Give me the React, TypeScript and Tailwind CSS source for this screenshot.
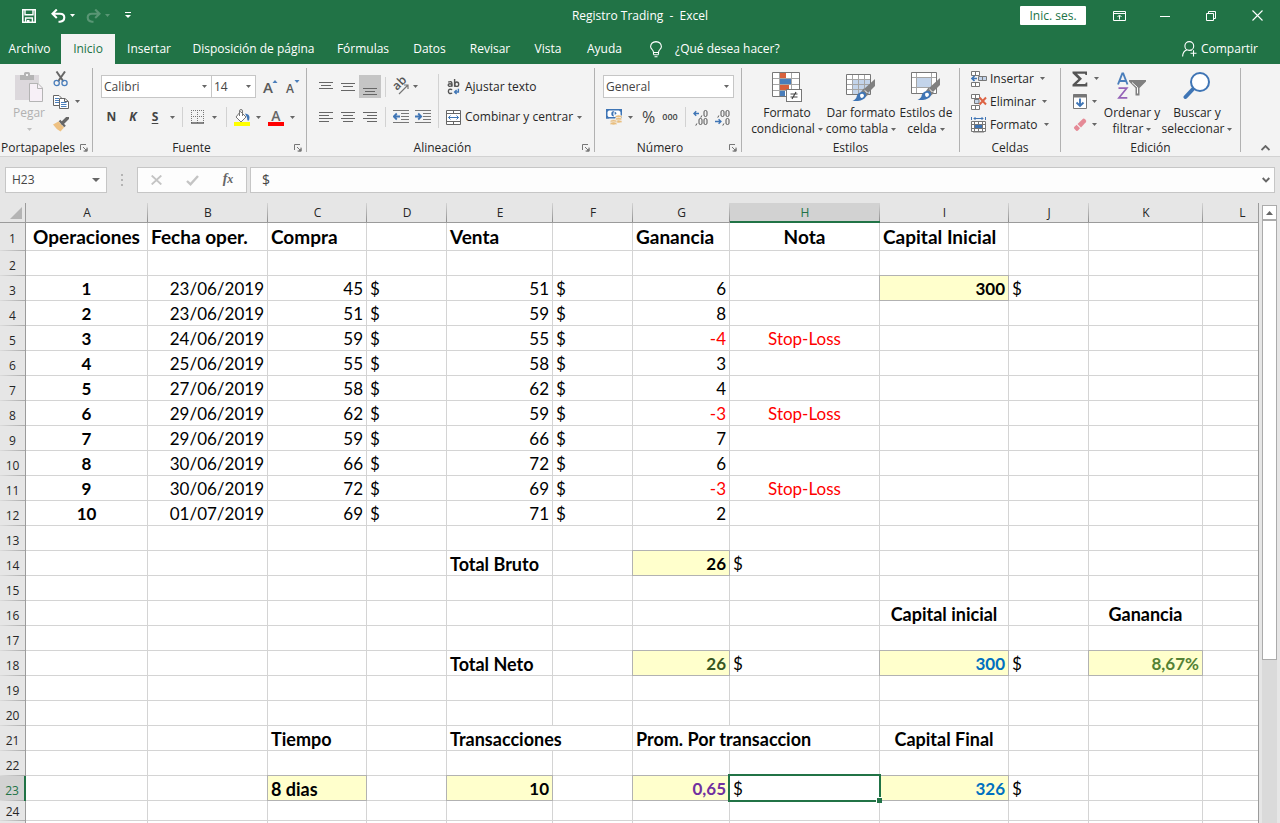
import type { ReactNode } from "react";

/* ---------- small shared pieces ---------- */

function Caret({ className = "" }: { className?: string }) {
  return (
    <svg className={`shrink-0 ${className}`} width="5" height="3" viewBox="0 0 5 3" aria-hidden="true">
      <path d="M0 0H5L2.5 3Z" fill="currentColor" />
    </svg>
  );
}

function CaretButton({ label, className = "w-4" }: { label: string; className?: string }) {
  return (
    <button type="button" aria-label={label} className={`flex h-full items-center justify-center text-[#666] ${className}`}>
      <Caret />
    </button>
  );
}

function IconButton({ label, className = "", children }: { label: string; className?: string; children: ReactNode }) {
  return (
    <button type="button" aria-label={label} className={`flex shrink-0 items-center justify-center ${className}`}>
      {children}
    </button>
  );
}

function Rule({ className = "" }: { className?: string }) {
  return <div className={`h-5 w-px shrink-0 bg-[#d2d2d2] ${className}`} />;
}

function Launcher() {
  return (
    <svg width="8" height="8" viewBox="0 0 8 8" fill="none" stroke="#777" aria-hidden="true">
      <path d="M0.5 6V0.5H6M3 3L6 6M7 3.5V7H3.5" />
      <path d="M7.5 4V7.5H4Z" fill="#777" stroke="none" />
    </svg>
  );
}

function Group({ title, width, launcher = false, children }: { title: string; width: string; launcher?: boolean; children: ReactNode }) {
  return (
    <>
      <section aria-label={title} className={`flex shrink-0 flex-col ${width}`}>
        <div className="flex h-[76px]">{children}</div>
        <div className="flex h-4 items-center">
          <span className="flex-1 text-center whitespace-nowrap">{title}</span>
          {launcher && (
            <IconButton label={`Configuración de ${title}`} className="w-4">
              <Launcher />
            </IconButton>
          )}
        </div>
      </section>
      <div className="my-1 w-px shrink-0 bg-[#b1b1b1]" />
    </>
  );
}

function BigButton({ icon, line1, line2, width, disabled = false }: { icon: ReactNode; line1: string; line2?: string; width: string; disabled?: boolean }) {
  return (
    <button type="button" className={`flex shrink-0 flex-col items-center pt-2 leading-4 whitespace-nowrap ${width} ${disabled ? "text-[#b1b1b1]" : ""}`}>
      <span className="mb-[3px] flex h-[30px] items-start">{icon}</span>
      <span>{line1}</span>
      <span className="flex h-4 items-center gap-[3px]">
        {line2}
        <Caret className={disabled ? "text-[#c0c0c0]" : "text-[#666]"} />
      </span>
    </button>
  );
}

/* ---------- icons ---------- */

const PasteIcon = () => (
  <svg width="28" height="30" viewBox="0 0 28 30">
    <path d="M0 3H24V28H0Z" fill="#dcd8dc" />
    <path d="M5 3H9V1.5Q9 0 10.5 0H13.5Q15 0 15 1.5V3H19V8H5Z" fill="#b4b4b4" />
    <rect x="11" y="2" width="2" height="2" fill="#f3f3f3" />
    <path d="M14.5 11.5H23L27.5 16V29.5H14.5Z" fill="#f7f0f7" stroke="#b4b4b4" />
    <path d="M22.5 11.5V16.5H27.5" fill="none" stroke="#b4b4b4" />
  </svg>
);

const CutIcon = () => (
  <svg width="16" height="16" viewBox="0 0 16 16" fill="none">
    <path d="M3.5 0.5L10.5 10.5M12 0.5L5 10.5" stroke="#666" strokeWidth="2" />
    <circle cx="3.7" cy="12" r="2.6" stroke="#4a7ebb" strokeWidth="1.3" />
    <circle cx="11.5" cy="12" r="2.6" stroke="#4a7ebb" strokeWidth="1.3" />
  </svg>
);

const CopyIcon = () => (
  <svg width="16" height="14" viewBox="0 0 16 14" fill="#fff" stroke="#666">
    <path d="M0.5 0.5H6L8.5 3V10.5H0.5Z" />
    <path d="M2 3.5H6M2 5.5H6M2 7.5H6" stroke="#4a7ebb" />
    <path d="M6.5 3.5H12L15.5 6.5V13.5H6.5Z" />
    <path d="M11.5 3.5V6.5H15" fill="none" />
    <path d="M8 7.5H13.5M8 9.5H13.5M8 11.5H13.5" stroke="#4a7ebb" />
  </svg>
);

const BrushIcon = () => (
  <svg width="16" height="15" viewBox="0 0 16 15">
    <path d="M0 7.5L5.5 4.5L11 10.5L7.5 14.5Q3 12 0 7.5Z" fill="#eec182" />
    <path d="M6.5 3.5L12 9.5" stroke="#666" strokeWidth="2.2" />
    <path d="M9.5 6L14.5 1" stroke="#666" strokeWidth="3.4" strokeLinecap="round" />
  </svg>
);

function FontSizeIcon({ up }: { up: boolean }) {
  return (
    <svg className="overflow-visible" width="15" height="16" viewBox="0 0 15 16" fontWeight="600" aria-hidden="true">
      <text x={up ? 0 : 1} y="14" fontSize={up ? 15 : 12} fill="#5a5a5a">A</text>
      <path d={up ? "M9.5 4H14.5L12 1Z" : "M9.5 1H14.5L12 4Z"} fill="#4a7ebb" />
    </svg>
  );
}

const BordersIcon = () => (
  <svg width="14" height="14" viewBox="0 0 14 14" fill="none" stroke="#777">
    <path d="M0 0.5H13M0 6.5H13M0.5 0V13M6.5 0V13M12.5 0V13" strokeDasharray="1 1" />
    <path d="M0 13H13" stroke="#555" strokeWidth="1.4" />
  </svg>
);

const FillIcon = () => (
  <svg width="16" height="17" viewBox="0 0 16 17">
    <path d="M6.5 2.5L12 8L7 13L2 8Z" fill="#fff" stroke="#777" />
    <path d="M5.5 7V2Q5.5 0.5 7 0.5T8.5 2V7" fill="none" stroke="#777" />
    <path d="M11 4.5Q15.5 5 15.5 8.5Q15.5 11 14 12Q13 10.5 13 8.5Z" fill="#3f75b5" />
    <rect y="13" width="16" height="4" fill="#ff0" />
  </svg>
);

const FontColorIcon = () => (
  <svg className="overflow-visible" width="16" height="17" viewBox="0 0 16 17">
    <text x="8" y="12" textAnchor="middle" fontSize="14" fontWeight="600" fill="#666">A</text>
    <rect y="13" width="16" height="4" fill="#f00" />
  </svg>
);

function LinesIcon({ d }: { d: string }) {
  return (
    <svg width="14" height="16" viewBox="0 0 14 16" fill="none" stroke="#666" aria-hidden="true">
      <path d={d} />
    </svg>
  );
}

const OrientationIcon = () => (
  <svg className="overflow-visible" width="16" height="16" viewBox="0 0 16 16">
    <text x="4" y="12" fontSize="12" fontWeight="600" fill="#555" transform="rotate(-45 4 12)">ab</text>
    <path d="M6 15L14.5 6.5M11 6H15V10" fill="none" stroke="#777" strokeWidth="1.2" />
  </svg>
);

function IndentIcon({ right }: { right: boolean }) {
  return (
    <svg width="16" height="14" viewBox="0 0 16 14" fill="none" stroke="#777" aria-hidden="true">
      <path d="M0 0.5H16M8 3.5H16M8 6.5H16M8 9.5H16M0 12.5H16" />
      <path d={right ? "M0 6.5H6M3.2 3.5L6.2 6.5L3.2 9.5" : "M1 6.5H7M3.8 3.5L0.8 6.5L3.8 9.5"} stroke="#3f75b5" strokeWidth="1.8" />
    </svg>
  );
}

const WrapIcon = () => (
  <svg width="14" height="16" viewBox="0 0 14 16" fill="none" stroke="#555" strokeWidth="1.4">
    <path d="M1.2 3.2Q4.9 1.6 4.9 4.6V7.8" />
    <ellipse cx="3" cy="6.1" rx="1.8" ry="1.3" />
    <path d="M7.6 0V7.8" />
    <ellipse cx="9.7" cy="5.2" rx="2" ry="2.2" />
    <path d="M5.2 10.7Q1.4 9.4 1.4 12.4Q1.5 15.3 5.2 14.2" />
    <path d="M11.4 9.8V13H8M9.6 11L7.6 13L9.6 15" stroke="#3f75b5" />
  </svg>
);

const MergeIcon = () => (
  <svg width="15" height="15" viewBox="0 0 15 15" fill="#fff" stroke="#666">
    <path d="M0.5 0.5H14.5V14.5H0.5ZM0.5 3.5H14.5M0.5 11.5H14.5M7.5 0.5V3.5M7.5 11.5V14.5" />
    <path d="M2.5 7.5H12.5M4.5 5.5L2.5 7.5L4.5 9.5M10.5 5.5L12.5 7.5L10.5 9.5" fill="none" stroke="#3f75b5" />
  </svg>
);

const CurrencyIcon = () => (
  <svg width="16" height="16" viewBox="0 0 16 16">
    <rect x="0.75" y="0.75" width="14.5" height="8" fill="#fff" stroke="#3f75b5" strokeWidth="1.5" />
    <path d="M0 0H3Q2.8 2.8 0 3ZM16 0H13Q13 2.8 16 3ZM0 9.5H3Q2.8 6.8 0 6.5Z" fill="#3f75b5" />
    <path d="M8 2A2.7 2.7 0 0 0 8 7.4Q6.6 4.8 8 2ZM8.5 2.4Q10.6 3.2 10.6 4.6L8.8 6Z" fill="#3f75b5" />
    <g fill="#e9be7e" stroke="#f3f3f3" strokeWidth="0.7">
      <ellipse cx="12.6" cy="7.5" rx="3.4" ry="1.6" />
      <ellipse cx="12.6" cy="10" rx="3.4" ry="1.6" />
      <ellipse cx="12.6" cy="12.5" rx="3.4" ry="1.6" />
      <ellipse cx="7.5" cy="12.2" rx="3.4" ry="1.6" />
      <ellipse cx="7.5" cy="14.4" rx="3.4" ry="1.6" />
    </g>
  </svg>
);

function Ring({ x, y }: { x: number; y: number }) {
  return <rect x={x} y={y} width="3" height="6" rx="1.4" />;
}

function DecimalsIcon({ more }: { more: boolean }) {
  return (
    <svg width="16" height="17" viewBox="0 0 16 17" fill="none" stroke="#555" aria-hidden="true">
      {more ? (
        <>
          <Ring x={11} y={1.5} />
          <Ring x={6} y={9.5} />
          <Ring x={11} y={9.5} />
          <path d="M8.8 6.5L7.8 8.6M3.8 14.5L2.8 16.6" />
          <path d="M0.8 4.5H6M3.2 2.3L0.9 4.5L3.2 6.7" stroke="#3f75b5" strokeWidth="1.4" />
        </>
      ) : (
        <>
          <Ring x={6} y={1.5} />
          <Ring x={11} y={1.5} />
          <Ring x={11} y={9.5} />
          <path d="M3.8 6.5L2.8 8.6M8.8 14.5L7.8 16.6" />
          <path d="M0 12.5H6M3.6 10.3L5.9 12.5L3.6 14.7" stroke="#3f75b5" strokeWidth="1.4" />
        </>
      )}
    </svg>
  );
}

const ConditionalIcon = () => (
  <svg width="30" height="30" viewBox="0 0 30 30">
    <path d="M0.5 0.5H27.5V24.5H0.5Z" fill="#fff" />
    <path d="M8 1H14V6H8Z" fill="#d8603c" />
    <path d="M8 7H19V12H8Z" fill="#4a7ebb" />
    <path d="M8 13H17V18H8Z" fill="#d8603c" />
    <path d="M8 19H13V24H8Z" fill="#4a7ebb" />
    <path d="M0.5 6.5H27.5M0.5 12.5H27.5M0.5 18.5H14M7.5 0.5V24.5M19.5 0.5V18" stroke="#a5a5a5" fill="none" />
    <path d="M0.5 0.5H27.5V24.5H0.5Z" fill="none" stroke="#777" />
    <rect x="14.5" y="17.5" width="15" height="12" fill="#fff" stroke="#777" />
    <path d="M18.5 22H25.5M18.5 25H25.5M24 20L20 27" stroke="#444" strokeWidth="1.2" />
  </svg>
);

const StyleBrush = () => (
  <>
    <path d="M29 7V14L22 21L18 17Z" fill="#808080" />
    <path d="M17.5 16.5L23 22L19.5 25L15 20Z" fill="#808080" />
    <path d="M18.8 18.4L21.4 21" stroke="#f3f3f3" strokeWidth="1" />
    <path d="M14 20.5Q17.5 18.5 19.6 21.2Q21 24 18.5 26.5Q15 29.5 6.5 29Q10.5 27 10.8 24Q11.2 21.6 14 20.5Z" fill="#3f75b5" />
    <path d="M14.3 22.2Q17 21 18 23.2Q18 25.5 16 26Q13.4 25.5 14.3 22.2Z" fill="#fff" />
  </>
);

const TableStyleIcon = () => (
  <svg width="30" height="30" viewBox="0 0 30 30">
    <path d="M0.5 2.5H24.5V22.5H0.5Z" fill="#fff" />
    <path d="M7 8H24V22H7Z" fill="#c3d4ea" />
    <path d="M0.5 7.5H24.5M0.5 12.5H24.5M0.5 17.5H24.5M6.5 2.5V22.5M12.5 2.5V22.5M18.5 2.5V22.5" stroke="#a5a5a5" />
    <path d="M0.5 2.5H24.5V22.5H0.5Z" fill="none" stroke="#777" />
    <StyleBrush />
  </svg>
);

const CellStyleIcon = () => (
  <svg width="30" height="30" viewBox="0 0 30 30">
    <path d="M0.5 0.5H25.5V21.5H0.5Z" fill="#fff" />
    <path d="M6 6H20V15H6Z" fill="#c3d4ea" />
    <path d="M0.5 5.5H25.5M0.5 15.5H25.5M5.5 0.5V21.5M20.5 0.5V21.5" stroke="#a5a5a5" />
    <path d="M0.5 0.5H25.5V21.5H0.5Z" fill="none" stroke="#777" />
    <g transform="translate(0 -1)">
      <StyleBrush />
    </g>
  </svg>
);

const InsertCellsIcon = () => (
  <svg width="16" height="16" viewBox="0 0 16 16" fill="#fff" stroke="#777">
    <path d="M0.5 0.5H8.5V4.5H0.5ZM4.5 0.5V4.5M0.5 11.5H8.5V15.5H0.5ZM4.5 11.5V15.5" />
    <path d="M7.5 5.5H15.5V9.5H7.5ZM11.5 5.5V9.5" fill="#c3d4ea" />
    <path d="M1 7.5H6M3.5 5L1 7.5L3.5 10" fill="none" stroke="#3f75b5" strokeWidth="1.7" />
  </svg>
);

const DeleteCellsIcon = () => (
  <svg width="16" height="16" viewBox="0 0 16 16" fill="#fff" stroke="#777">
    <path d="M0.5 0.5H8.5V4.5H0.5ZM4.5 0.5V4.5M0.5 11.5H8.5V15.5H0.5ZM4.5 11.5V15.5" />
    <path d="M3.5 5.5H8V9.5H3.5Z" fill="#c3d4ea" />
    <path d="M8.5 3.5L15 10.5M15 3.5L8.5 10.5" stroke="#dd6344" strokeWidth="2" />
  </svg>
);

const FormatCellsIcon = () => (
  <svg width="15" height="16" viewBox="0 0 15 16" fill="#fff" stroke="#777">
    <path d="M0.5 4.5H14.5V14.5H0.5ZM0.5 7.5H14.5M0.5 11.5H14.5M3.5 4.5V14.5M11.5 4.5V14.5M7.5 4.5V14.5" />
    <path d="M4 8H11V11H4Z" fill="#3f75b5" stroke="none" />
    <path d="M0.5 0V3M14.5 0V3M3 1.5H12M4.5 0L3 1.5L4.5 3M10.5 0L12 1.5L10.5 3" fill="none" stroke="#3f75b5" />
    <path d="M2 15.5H13" stroke="#b8b8b8" />
  </svg>
);

const SumIcon = () => (
  <svg width="16" height="16" viewBox="0 0 16 16">
    <path d="M0.5 0.5H15V4H13.5L13 2.8H5L10 7.8L4.6 13H13.2L14 11.5H15.3V15.5H0.5V13.6L6.4 8L0.5 2.2Z" fill="#555" />
  </svg>
);

const FillDownIcon = () => (
  <svg width="14" height="15" viewBox="0 0 14 15" fill="#fff" stroke="#777">
    <path d="M0.5 0.5H13.5V14.5H0.5Z" />
    <path d="M0.5 1H13.5V3H0.5Z" fill="#777" />
    <path d="M7 4.5V12M3.5 8.5L7 12L10.5 8.5" fill="none" stroke="#3f75b5" strokeWidth="1.9" />
  </svg>
);

const EraserIcon = () => (
  <svg width="14" height="14" viewBox="0 0 14 14">
    <path d="M4.5 6L10 0.8Q11 0.2 12 1.3L13 2.6Q13.5 3.5 12.8 4.3L8 9.5Z" fill="#e58a96" />
    <path d="M3.6 6.8L7 10.3L5 12.6Q4 13.4 3 12.4L1.3 10.7Q0.4 9.7 1.4 8.8Z" fill="#e58a96" />
  </svg>
);

const SortIcon = () => (
  <svg width="30" height="28" viewBox="0 0 30 28" fill="none">
    <path d="M1 12.5L5.3 1.5H6.2L10.5 12.5M2.7 9H8.8" stroke="#4a7ebb" strokeWidth="1.9" />
    <path d="M1.5 16.2H9.7L2 25.8H10.3" stroke="#9563b8" strokeWidth="1.8" />
    <path d="M12 8H29V9.5L22.5 16V23.5H18.5V16L12 9.5Z" fill="#808080" />
    <path d="M15 10.5L20.5 15.5V21.5" stroke="#fff" />
  </svg>
);

const SearchIcon = () => (
  <svg width="28" height="28" viewBox="0 0 28 28" fill="none">
    <path d="M10 17L2.5 25" stroke="#3f75b5" strokeWidth="4" strokeLinecap="round" />
    <circle cx="17" cy="10" r="9" fill="#fff" stroke="#3f75b5" strokeWidth="2" />
  </svg>
);

const SaveIcon = () => (
  <svg width="14" height="14" viewBox="0 0 14 14" fill="none" stroke="#fff" strokeWidth="1.6">
    <path d="M0.8 0.8H13.2V13.2H0.8Z" />
    <path d="M3 1V5.7H11V1M3.6 13V9H10.4V13" strokeWidth="1.4" />
    <path d="M5 11H7.5V13.5H5Z" fill="#fff" stroke="none" />
  </svg>
);

const UndoIcon = ({ flip = false }: { flip?: boolean }) => (
  <svg width="15" height="14" viewBox="0 0 15 14" fill="none" stroke="#fff" strokeWidth="2.1" className={flip ? "-scale-x-100" : ""}>
    <path d="M5.8 0.5L1.5 4.7L5.8 8.9M1.8 4.7H9Q13.3 4.8 13.3 8.5Q13.2 12.3 9 12.7H7.5" />
  </svg>
);

/* ---------- title bar and tabs ---------- */

function TitleBar() {
  return (
    <header className="grid h-[31px] grid-cols-[1fr_auto_1fr] items-center text-white">
      <div className="flex h-full items-center pl-[22px]">
        <IconButton label="Guardar"><SaveIcon /></IconButton>
        <IconButton label="Deshacer" className="ml-[15px]"><UndoIcon /></IconButton>
        <IconButton label="Más acciones de deshacer" className="w-3"><Caret /></IconButton>
        <div className="flex items-center opacity-25">
          <IconButton label="Rehacer" className="ml-2"><UndoIcon flip /></IconButton>
          <IconButton label="Más acciones de rehacer" className="w-3"><Caret /></IconButton>
        </div>
        <IconButton label="Personalizar barra de acceso rápido" className="ml-3">
          <svg width="6" height="7" viewBox="0 0 6 7"><path d="M0 0.5H6" stroke="#fff" /><path d="M0 3H6L3 6Z" fill="#fff" /></svg>
        </IconButton>
      </div>
      <h1 className="whitespace-pre">{"Registro Trading  -  Excel"}</h1>
      <div className="flex h-full items-center justify-end">
        <button type="button" className="mr-[10px] h-[19px] w-[66px] rounded-[1px] bg-white leading-[19px] text-[#217346]">Inic. ses.</button>
        <IconButton label="Opciones de presentación de la cinta" className="w-[46px]">
          <svg width="13" height="10" viewBox="0 0 13 10" fill="none" stroke="#fff"><path d="M0.5 0.5H12.5V9.5H0.5ZM0.5 2.5H12.5M6.5 8.5V4.5M4.5 6L6.5 4L8.5 6" /></svg>
        </IconButton>
        <IconButton label="Minimizar" className="w-[46px]">
          <svg width="10" height="10" viewBox="0 0 10 10" stroke="#fff"><path d="M0 5.5H10" /></svg>
        </IconButton>
        <IconButton label="Restaurar" className="w-[46px]">
          <svg width="10" height="10" viewBox="0 0 10 10" fill="none" stroke="#fff"><path d="M0.5 2.5H7.5V9.5H0.5ZM2.5 2.5V0.5H9.5V7.5H7.5" /></svg>
        </IconButton>
        <IconButton label="Cerrar" className="w-[46px]">
          <svg width="11" height="11" viewBox="0 0 11 11" stroke="#fff" strokeWidth="1.1"><path d="M0.5 0.5L10.5 10.5M10.5 0.5L0.5 10.5" /></svg>
        </IconButton>
      </div>
    </header>
  );
}

const tabs = [
  { name: "Archivo", width: "w-[59px] mr-0.5" },
  { name: "Inicio", width: "w-[54px]", active: true },
  { name: "Insertar", width: "w-[68px]" },
  { name: "Disposición de página", width: "w-[141px]" },
  { name: "Fórmulas", width: "w-[78px]" },
  { name: "Datos", width: "w-[55px]" },
  { name: "Revisar", width: "w-[66px]" },
  { name: "Vista", width: "w-[50px]" },
  { name: "Ayuda", width: "w-[63px]" },
];

function TabBar() {
  return (
    <nav aria-label="Cinta de opciones" className="flex h-[33px] items-end text-white">
      {tabs.map((t) => (
        <button key={t.name} type="button" className={`h-[30px] shrink-0 whitespace-nowrap ${t.width} ${t.active ? "bg-[#f3f3f3] text-[#217346]" : ""}`}>
          {t.name}
        </button>
      ))}
      <button type="button" className="ml-[14px] flex h-[30px] items-center gap-[13px] whitespace-nowrap">
        <svg width="12" height="17" viewBox="0 0 12 17" fill="none" stroke="#fff" strokeWidth="1.1">
          <path d="M3.5 11.5Q3.5 9.8 2 8.4Q0.6 7 0.6 5.5Q1 0.9 6 0.6Q11 0.9 11.4 5.5Q11.4 7 10 8.4Q8.5 9.8 8.5 11.5ZM3.5 13.7H8.5M4.5 15.8H7.5M3.5 11.5V13.5M8.5 11.5V13.5" />
        </svg>
        ¿Qué desea hacer?
      </button>
      <button type="button" className="mr-[22px] ml-auto flex h-[30px] items-center gap-1 whitespace-nowrap">
        <svg width="15" height="16" viewBox="0 0 15 16" fill="none" stroke="#fff" strokeWidth="1.1">
          <circle cx="7.3" cy="5" r="4.4" />
          <path d="M0.6 15.5Q0.8 10.3 5 8.8M8.5 9.2L9.5 9.8M8.5 12.2H14.5M11.5 9.2V15.5" />
        </svg>
        Compartir
      </button>
    </nav>
  );
}

/* ---------- ribbon ---------- */

function RibbonSelect({ label, value, width }: { label: string; value: string; width: string }) {
  return (
    <label className={`grid h-[23px] shrink-0 items-center border border-[#c6c6c6] bg-white text-[#444] ${width}`}>
      <select aria-label={label} defaultValue={value} className="col-start-1 row-start-1 h-full w-full appearance-none bg-transparent pl-0.5 outline-none">
        <option>{value}</option>
      </select>
      <Caret className="pointer-events-none col-start-1 row-start-1 mr-1 justify-self-end text-[#666]" />
    </label>
  );
}

function CellAction({ icon, label }: { icon: ReactNode; label: string }) {
  return (
    <button type="button" className="flex h-[23px] items-center whitespace-nowrap">
      <span className="mr-[3px] w-4">{icon}</span>
      {label}
      <Caret className="ml-[6px] text-[#666]" />
    </button>
  );
}

function Ribbon() {
  return (
    <div className="flex h-[93px] overflow-hidden border-b border-[#d2d2d2] bg-[#f3f3f3] text-[#262626]">
      <Group title="Portapapeles" width="w-[92px]" launcher>
        <BigButton icon={<PasteIcon />} line1="Pegar" width="ml-3 w-[34px]" disabled />
        <div className="ml-[7px] flex flex-col pt-[3px]">
          <IconButton label="Cortar" className="h-[23px] w-4"><CutIcon /></IconButton>
          <div className="flex h-[23px]">
            <IconButton label="Copiar" className="w-4"><CopyIcon /></IconButton>
            <CaretButton label="Opciones de copiar" />
          </div>
          <IconButton label="Copiar formato" className="h-[23px] w-4"><BrushIcon /></IconButton>
        </div>
      </Group>

      <Group title="Fuente" width="w-[213px]" launcher>
        <div className="flex flex-col gap-2 pt-[11px] pl-2">
          <div className="flex h-[23px] items-center">
            <RibbonSelect label="Fuente" value="Calibri" width="w-[111px]" />
            <RibbonSelect label="Tamaño de fuente" value="14" width="-ml-px w-[45px]" />
            <IconButton label="Aumentar tamaño de fuente" className="ml-[3px] w-[22px]"><FontSizeIcon up /></IconButton>
            <IconButton label="Disminuir tamaño de fuente" className="w-[22px]"><FontSizeIcon up={false} /></IconButton>
          </div>
          <div className="flex h-[22px] items-center text-[#444]">
            <button type="button" className="w-[21px] font-bold">N</button>
            <button type="button" className="w-[22px] font-bold italic">K</button>
            <button type="button" className="w-[22px] font-bold underline underline-offset-2">S</button>
            <CaretButton label="Opciones de subrayado" className="w-3" />
            <Rule className="ml-1" />
            <IconButton label="Bordes" className="ml-[7px] w-4"><BordersIcon /></IconButton>
            <CaretButton label="Opciones de bordes" />
            <Rule className="ml-1" />
            <IconButton label="Color de relleno" className="ml-[7px] w-4"><FillIcon /></IconButton>
            <CaretButton label="Opciones de relleno" />
            <IconButton label="Color de fuente" className="ml-0.5 w-4"><FontColorIcon /></IconButton>
            <CaretButton label="Opciones de color de fuente" />
          </div>
        </div>
      </Group>

      <Group title="Alineación" width="w-[287px]" launcher>
        <div className="flex w-[131px] flex-col gap-2 pt-[11px] pl-2">
          <div className="flex h-[23px] items-center">
            <IconButton label="Alinear en la parte superior" className="h-full w-[22px]"><LinesIcon d="M0 3.5H14M2 6.5H12M0 9.5H14" /></IconButton>
            <IconButton label="Alinear en el medio" className="h-full w-[22px]"><LinesIcon d="M0 4.5H14M2 7.5H12M0 11.5H14" /></IconButton>
            <IconButton label="Alinear en la parte inferior" className="h-full w-[22px] bg-[#c5c5c5]"><LinesIcon d="M0 9.5H14M2 12.5H12M0 15.5H14" /></IconButton>
            <Rule className="ml-1" />
            <IconButton label="Orientación" className="ml-[7px] w-4"><OrientationIcon /></IconButton>
            <CaretButton label="Opciones de orientación" className="w-3" />
          </div>
          <div className="flex h-[22px] items-center">
            <IconButton label="Alinear a la izquierda" className="w-[22px]"><LinesIcon d="M0 3.5H14M0 6.5H10M0 9.5H14M0 12.5H10" /></IconButton>
            <IconButton label="Centrar" className="w-[22px]"><LinesIcon d="M0 3.5H14M2 6.5H12M0 9.5H14M2 12.5H12" /></IconButton>
            <IconButton label="Alinear a la derecha" className="w-[22px]"><LinesIcon d="M0 3.5H14M4 6.5H14M0 9.5H14M4 12.5H14" /></IconButton>
            <Rule className="ml-1" />
            <IconButton label="Disminuir sangría" className="ml-[7px] w-4"><IndentIcon right={false} /></IconButton>
            <IconButton label="Aumentar sangría" className="ml-[6px] w-4"><IndentIcon right /></IconButton>
          </div>
        </div>
        <div className="mt-[10px] h-[54px] w-px bg-[#d2d2d2]" />
        <div className="flex flex-col gap-2 pt-[11px] pl-[7px]">
          <button type="button" className="flex h-[23px] items-center whitespace-nowrap">
            <span className="mr-[3px] flex w-4 justify-center"><WrapIcon /></span>
            Ajustar texto
          </button>
          <button type="button" className="flex h-[22px] items-center whitespace-nowrap">
            <span className="mr-[3px] w-4"><MergeIcon /></span>
            Combinar y centrar
            <Caret className="ml-1 text-[#666]" />
          </button>
        </div>
      </Group>

      <Group title="Número" width="w-[146px]" launcher>
        <div className="flex flex-col gap-2 pt-[11px] pl-2">
          <RibbonSelect label="Formato de número" value="General" width="w-[131px]" />
          <div className="flex h-[22px] items-center text-[#444]">
            <IconButton label="Formato de contabilidad" className="ml-[3px] w-4"><CurrencyIcon /></IconButton>
            <CaretButton label="Opciones de contabilidad" />
            <button type="button" className="w-[21px] text-base">%</button>
            <button type="button" aria-label="Estilo millares" className="w-[22px] text-[9px] font-semibold">000</button>
            <Rule className="ml-1" />
            <IconButton label="Aumentar decimales" className="ml-[7px] w-4"><DecimalsIcon more /></IconButton>
            <IconButton label="Disminuir decimales" className="ml-[6px] w-4"><DecimalsIcon more={false} /></IconButton>
          </div>
        </div>
      </Group>

      <Group title="Estilos" width="w-[217px]">
        <BigButton icon={<ConditionalIcon />} line1="Formato" line2="condicional" width="ml-[7px] w-[76px]" />
        <BigButton icon={<TableStyleIcon />} line1="Dar formato" line2="como tabla" width="w-[72px]" />
        <BigButton icon={<CellStyleIcon />} line1="Estilos de" line2="celda" width="ml-px w-[56px]" />
      </Group>

      <Group title="Celdas" width="w-[100px]">
        <div className="flex flex-col items-start pt-[3px] pl-[11px]">
          <CellAction icon={<InsertCellsIcon />} label="Insertar" />
          <CellAction icon={<DeleteCellsIcon />} label="Eliminar" />
          <CellAction icon={<FormatCellsIcon />} label="Formato" />
        </div>
      </Group>

      <Group title="Edición" width="w-[179px]">
        <div className="flex flex-col pt-[3px] pl-[11px]">
          <div className="flex h-[23px]">
            <IconButton label="Autosuma" className="w-4"><SumIcon /></IconButton>
            <CaretButton label="Opciones de autosuma" />
          </div>
          <div className="flex h-[23px]">
            <IconButton label="Rellenar" className="w-4"><FillDownIcon /></IconButton>
            <CaretButton label="Opciones de rellenar" className="w-3" />
          </div>
          <div className="flex h-[23px]">
            <IconButton label="Borrar" className="w-4"><EraserIcon /></IconButton>
            <CaretButton label="Opciones de borrar" className="w-3" />
          </div>
        </div>
        <BigButton icon={<SortIcon />} line1="Ordenar y" line2="filtrar" width="-ml-0.5 w-[60px]" />
        <BigButton icon={<SearchIcon />} line1="Buscar y" line2="seleccionar" width="w-[70px]" />
      </Group>

      <IconButton label="Contraer la cinta" className="mr-[10px] mb-[5px] ml-auto self-end">
        <svg width="9" height="6" viewBox="0 0 9 6" fill="none" stroke="#666" strokeWidth="1.8"><path d="M0.5 5L4.5 1L8.5 5" /></svg>
      </IconButton>
    </div>
  );
}

/* ---------- formula bar ---------- */

function FormulaBar() {
  return (
    <div className="flex h-[46px] px-[5px] pt-[10px] text-[#444]">
      <div className="flex h-[26px] w-[102px] shrink-0 items-center border border-[#c6c6c6] bg-[#fdfdfd]">
        <input aria-label="Cuadro de nombres" defaultValue="H23" className="w-full min-w-0 bg-transparent pl-[6px] outline-none" />
        <IconButton label="Lista de nombres" className="mr-[6px] text-[#666]">
          <svg width="8" height="4" viewBox="0 0 8 4"><path d="M0 0H8L4 4Z" fill="currentColor" /></svg>
        </IconButton>
      </div>
      <div className="flex h-[26px] w-[30px] shrink-0 items-center justify-center">
        <svg width="2" height="12" viewBox="0 0 2 12" fill="#b4b4b4"><path d="M0 0H2V2H0ZM0 5H2V7H0ZM0 10H2V12H0Z" /></svg>
      </div>
      <div className="flex h-[26px] w-[110px] shrink-0 border border-[#c6c6c6] bg-[#fdfdfd]">
        <IconButton label="Cancelar" className="w-9">
          <svg width="11" height="10" viewBox="0 0 11 10" stroke="#c4c4c4" strokeWidth="1.8"><path d="M0.7 0.5L10.3 9.5M10.3 0.5L0.7 9.5" /></svg>
        </IconButton>
        <IconButton label="Introducir" className="w-9">
          <svg width="13" height="11" viewBox="0 0 13 11" fill="none" stroke="#c4c4c4" strokeWidth="2.4"><path d="M1 6L4.5 9.3L12 1" /></svg>
        </IconButton>
        <button type="button" aria-label="Insertar función" className="flex-1 pb-0.5 font-['Liberation_Serif',serif] text-sm font-bold text-[#666] italic">
          f<span className="text-xs">x</span>
        </button>
      </div>
      <div className="ml-[3px] flex h-[26px] min-w-0 flex-1 items-center border border-[#c6c6c6] bg-[#fdfdfd]">
        <input aria-label="Barra de fórmulas" defaultValue="$" className="min-w-0 flex-1 bg-transparent pl-[11px] text-sm outline-none" />
        <IconButton label="Expandir barra de fórmulas" className="mr-1">
          <svg width="8" height="6" viewBox="0 0 8 6" fill="none" stroke="#666" strokeWidth="1.9"><path d="M0.7 1L4 4.3L7.3 1" /></svg>
        </IconButton>
      </div>
    </div>
  );
}

/* ---------- worksheet ---------- */

type Align = "l" | "c" | "r";
interface Cell {
  text: string;
  align: Align;
  bold?: boolean;
  boxed?: boolean;
  color?: string;
  span?: number;
}

const columns = [
  { id: "A", width: "w-[122px]" },
  { id: "B", width: "w-[120px]" },
  { id: "C", width: "w-[99px]" },
  { id: "D", width: "w-[80px]" },
  { id: "E", width: "w-[106px]" },
  { id: "F", width: "w-[80px]" },
  { id: "G", width: "w-[97px]" },
  { id: "H", width: "w-[150px]" },
  { id: "I", width: "w-[129px]" },
  { id: "J", width: "w-[80px]" },
  { id: "K", width: "w-[114px]" },
  { id: "L", width: "" },
];

const operations: [string, number, number, number][] = [
  ["23/06/2019", 45, 51, 6],
  ["23/06/2019", 51, 59, 8],
  ["24/06/2019", 59, 55, -4],
  ["25/06/2019", 55, 58, 3],
  ["27/06/2019", 58, 62, 4],
  ["29/06/2019", 62, 59, -3],
  ["29/06/2019", 59, 66, 7],
  ["30/06/2019", 66, 72, 6],
  ["30/06/2019", 72, 69, -3],
  ["01/07/2019", 69, 71, 2],
];

const dollar: Cell = { text: "$", align: "l" };
const heading = (text: string, align: Align = "l", span?: number): Cell => ({ text, align, bold: true, span });
const result = (text: string, color = "text-black", align: Align = "r"): Cell => ({ text, align, bold: true, boxed: true, color });

const cells: Record<string, Cell> = {
  A1: heading("Operaciones", "c"),
  B1: heading("Fecha oper."),
  C1: heading("Compra"),
  E1: heading("Venta"),
  G1: heading("Ganancia"),
  H1: heading("Nota", "c"),
  I1: heading("Capital Inicial"),
  I3: result("300"),
  J3: dollar,
  E14: heading("Total Bruto"),
  G14: result("26"),
  H14: dollar,
  I16: heading("Capital inicial", "c"),
  K16: heading("Ganancia", "c"),
  E18: heading("Total Neto"),
  G18: result("26", "text-[#375623]"),
  H18: dollar,
  I18: result("300", "text-[#0070c0]"),
  J18: dollar,
  K18: result("8,67%", "text-[#548235]"),
  C21: heading("Tiempo"),
  E21: heading("Transacciones", "l", 2),
  G21: heading("Prom. Por transaccion", "l", 2),
  I21: heading("Capital Final", "c"),
  C23: result("8 dias", "text-black", "l"),
  E23: result("10"),
  G23: result("0,65", "text-[#7030a0]"),
  H23: dollar,
  I23: result("326", "text-[#0070c0]"),
  J23: dollar,
};

operations.forEach(([date, buy, sell, gain], i) => {
  const row = i + 3;
  cells[`A${row}`] = heading(String(i + 1), "c");
  cells[`B${row}`] = { text: date, align: "r" };
  cells[`C${row}`] = { text: String(buy), align: "r" };
  cells[`D${row}`] = dollar;
  cells[`E${row}`] = { text: String(sell), align: "r" };
  cells[`F${row}`] = dollar;
  cells[`G${row}`] = { text: String(gain), align: "r", color: gain < 0 ? "text-[#f00]" : undefined };
  if (gain < 0) cells[`H${row}`] = { text: "Stop-Loss", align: "c", color: "text-[#f00]" };
});

const SELECTED = { column: "H", row: 23 };
const rowNumbers = Array.from({ length: 25 }, (_, i) => i + 1);
const alignClass: Record<Align, string> = { l: "text-left", c: "text-center", r: "text-right" };

function rowHeight(row: number) {
  if (row === 1) return "h-7";
  return row >= 24 ? "h-5" : "h-[25px]";
}

/* Bold labels are set one step larger than figures; row 1 holds the titles. */
function textSize(row: number, cell?: Cell) {
  if (row === 1) return "text-[19px]";
  return cell?.bold && /[a-z]/i.test(cell.text) ? "text-lg" : "text-[17px]";
}

function SheetRow({ row }: { row: number }) {
  const tds: ReactNode[] = [];
  for (let i = 0; i < columns.length; i++) {
    const id = columns[i].id;
    const cell = cells[`${id}${row}`];
    const selected = id === SELECTED.column && row === SELECTED.row;
    const padding = row === 1 ? "py-0" : cell ? "pt-0.5 pb-0" : "py-0";
    const lineHeight = row === 1 ? "leading-6" : "leading-[22px]";
    tds.push(
      <td
        key={id}
        colSpan={cell?.span}
        className={`border-b px-[3px] whitespace-nowrap ${padding} ${id === "L" ? "" : "border-r"} ${cell?.boxed ? "border-[#b2b2b2] bg-[#ffffcc] shadow-[-1px_0_#b2b2b2,0_-1px_#b2b2b2,-1px_-1px_#b2b2b2]" : "border-[#d4d4d4]"} ${textSize(row, cell)} ${lineHeight} ${cell?.bold ? "font-bold" : ""} ${cell ? alignClass[cell.align] : ""} ${cell?.color ?? "text-black"} ${selected ? "relative z-10" : ""}`}
      >
        {cell?.text}
        {selected && (
          <span className="pointer-events-none absolute -inset-0.5 border-2 border-[#217346]">
            <span className="absolute -right-[3px] -bottom-[3px] size-[6px] border-t border-l border-white bg-[#217346]" />
          </span>
        )}
      </td>,
    );
    if (cell?.span) i += cell.span - 1;
  }
  const active = row === SELECTED.row;
  return (
    <tr className={rowHeight(row)}>
      <th
        scope="row"
        className={`bg-[linear-gradient(to_right,#dcdcdc,#ababab)] bg-[length:100%_1px] bg-bottom bg-no-repeat p-0 font-normal leading-4 ${row < 24 ? "pt-1" : "pt-0.5"} ${active ? "border-r-2 border-[#217346] bg-[#d2d2d2] text-[#217346]" : "border-r border-[#9b9b9b] bg-[#e6e6e6] text-[#262626]"}`}
      >
        {row < 25 ? row : ""}
      </th>
      {tds}
    </tr>
  );
}

function Sheet() {
  return (
    <div className="min-w-0 flex-1 overflow-hidden border-r border-[#9b9b9b]">
      <table className="w-full table-fixed border-separate border-spacing-0 bg-white font-[Lato,sans-serif]">
        <colgroup>
          <col className="w-[26px]" />
          {columns.map((c) => (
            <col key={c.id} className={c.width} />
          ))}
        </colgroup>
        <thead className="bg-[#e6e6e6] font-['Open_Sans',sans-serif]">
          <tr className="h-5">
            <th className="border-r border-b border-[#9b9b9b] p-0">
              <button type="button" aria-label="Seleccionar todo" className="flex w-full justify-end pr-[3px]">
                <svg width="12" height="12" viewBox="0 0 12 12"><path d="M12 0V12H0Z" fill="#b4b4b4" /></svg>
              </button>
            </th>
            {columns.map((c) => {
              const active = c.id === SELECTED.column;
              return (
                <th
                  key={c.id}
                  scope="col"
                  className={`p-0 font-normal leading-4 ${active ? "border-b-2 border-[#217346] bg-[#d2d2d2] pt-px text-[#217346]" : "border-b border-[#9b9b9b] text-[#262626]"} ${c.id === "L" ? "pl-6" : "bg-[linear-gradient(to_bottom,#d4d4d4,#8f8f8f)] bg-[length:1px_100%] bg-right bg-no-repeat"}`}
                >
                  {c.id}
                </th>
              );
            })}
          </tr>
        </thead>
        <tbody className="[&_th]:font-['Open_Sans',sans-serif]">
          {rowNumbers.map((row) => (
            <SheetRow key={row} row={row} />
          ))}
        </tbody>
      </table>
    </div>
  );
}

function ScrollBar() {
  return (
    <div className="flex w-[21px] shrink-0 flex-col items-center pt-0.5">
      <IconButton label="Desplazar hacia arriba" className="h-[15px] w-[15px] border border-[#ababab] bg-white">
        <svg width="7" height="4" viewBox="0 0 7 4"><path d="M3.5 0L7 4H0Z" fill="#666" /></svg>
      </IconButton>
      <div className="w-[15px] flex-1 bg-[#dadada]">
        <div className="h-[73%] border border-[#ababab] bg-white" />
      </div>
    </div>
  );
}

export default function App() {
  return (
    <div className="flex h-screen flex-col overflow-hidden bg-[#e6e6e6] font-['Open_Sans',sans-serif] text-xs">
      <div className="bg-[#217346]">
        <TitleBar />
        <TabBar />
      </div>
      <Ribbon />
      <FormulaBar />
      <main className="flex min-h-0 flex-1">
        <Sheet />
        <ScrollBar />
      </main>
    </div>
  );
}
